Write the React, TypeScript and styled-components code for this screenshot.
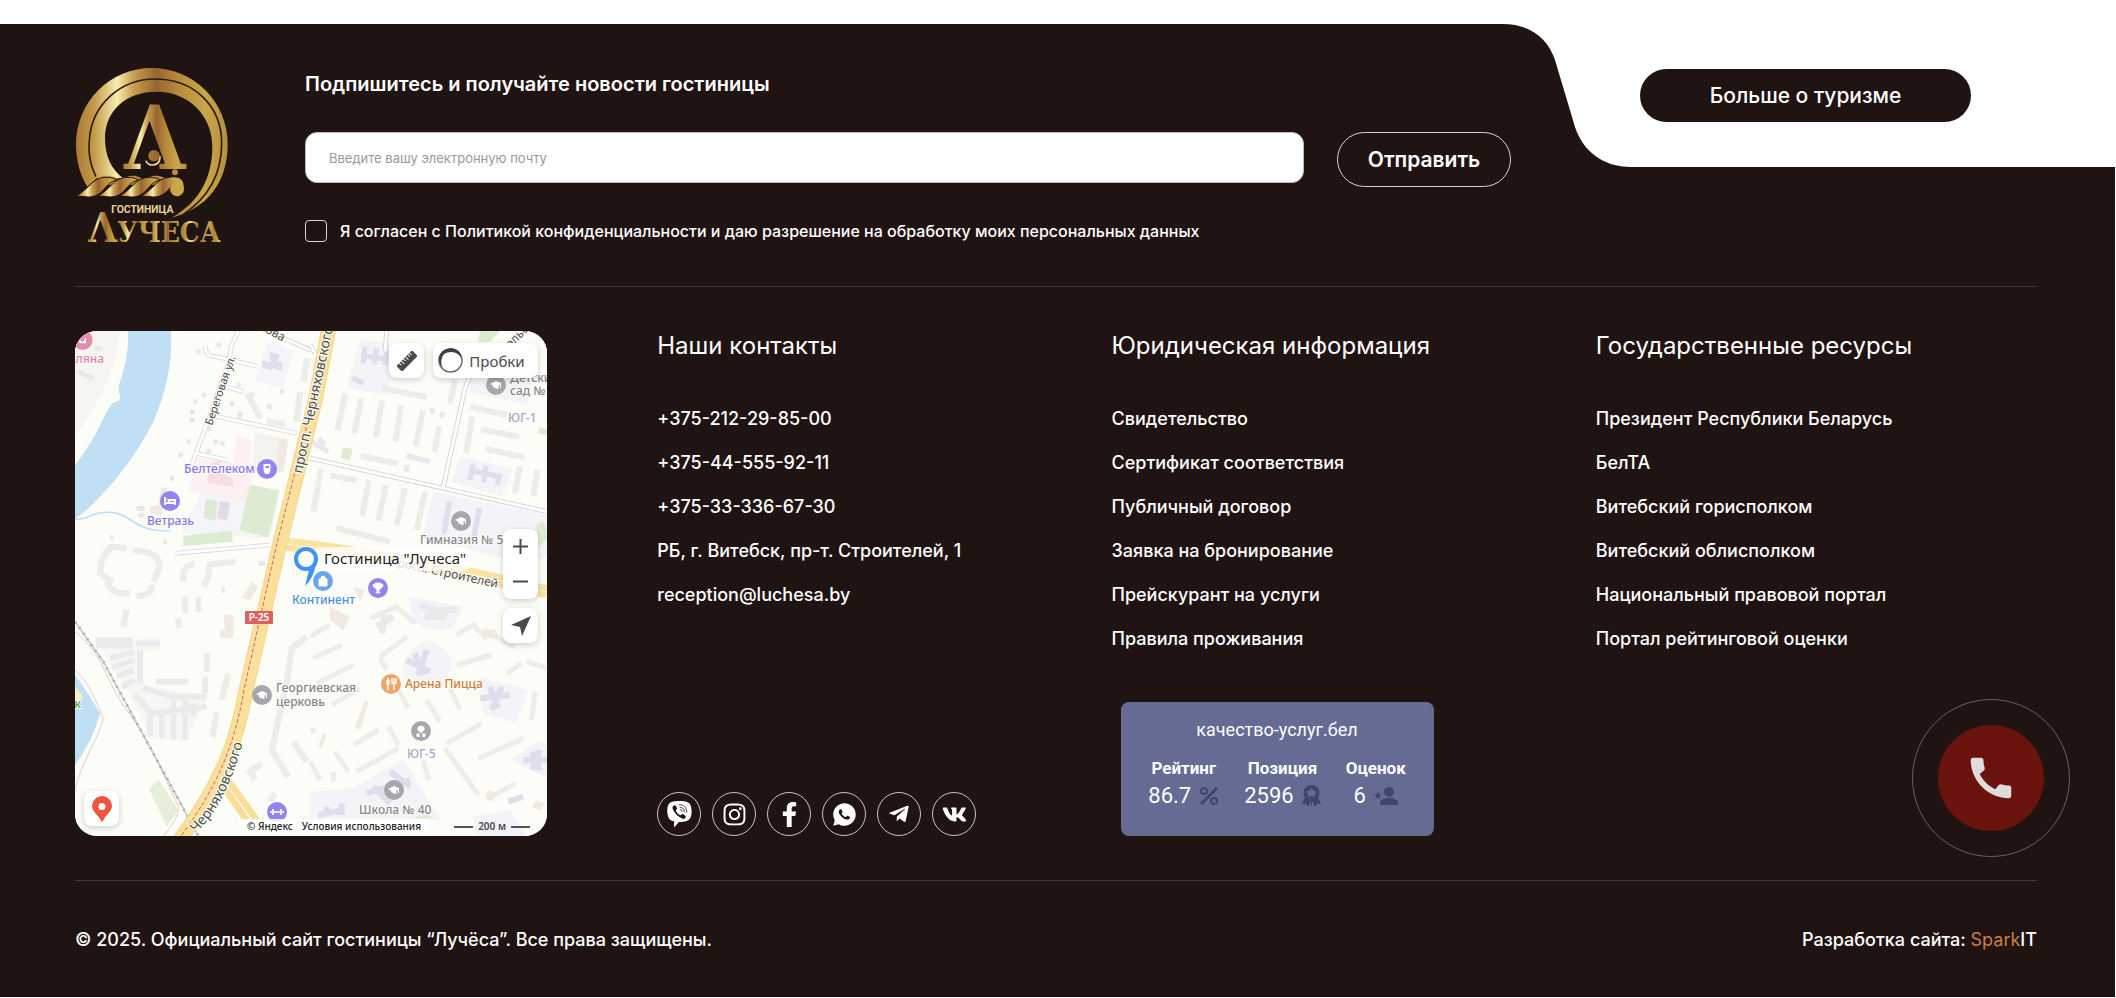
import React from "react";
import styled, { createGlobalStyle } from "styled-components";
import { FaFacebookF, FaInstagram, FaTelegramPlane, FaVk } from "react-icons/fa";
import { RiWhatsappFill } from "react-icons/ri";
import { MdCall } from "react-icons/md";

const dark = "#201412";
const line = "#3d3535";

const GlobalStyle = createGlobalStyle`
  *, *::before, *::after { box-sizing: border-box; }
  body {
    margin: 0;
    background: #fff;
    color: #fff;
    font-family: Inter, "Liberation Sans", sans-serif;
  }
  a { color: inherit; text-decoration: none; }
  button { font: inherit; cursor: pointer; }
`;

const Footer = styled.footer`
  position: relative;
  margin-top: 24px;
  margin-right: 1px;
  padding: 43px 78px 0 75px;
  background: ${dark};
`;

const Notch = styled.div`
  position: absolute;
  top: 0;
  right: -1px;
  display: flex;
  align-items: flex-start;
  margin-top: -1px;
`;

const NotchCurve = styled.svg`
  display: block;
  width: 128px;
  height: 144px;
`;

const NotchBody = styled.div`
  height: 144px;
  padding: 46px 145px 0 9px;
  background: #fff;
`;

const TourismLink = styled.a`
  display: flex;
  align-items: center;
  justify-content: center;
  width: 331px;
  height: 53px;
  border-radius: 27px;
  background: ${dark};
  font-size: 21px;
  font-weight: 500;
`;

const Top = styled.div`
  display: flex;
  align-items: center;
  gap: 77px;
  padding-bottom: 42px;
  border-bottom: 1px solid ${line};
`;

const LogoArt = styled.svg`
  display: block;
  flex: none;
  width: 153px;
  height: 177px;
  overflow: visible;
`;

const SubscribeForm = styled.form`
  flex: 0 1 1206px;
  display: flex;
  flex-direction: column;
  gap: 33px;
`;

const FormTitle = styled.label`
  font-size: 20px;
  font-weight: 600;
  line-height: 30px;
`;

const FormRow = styled.div`
  display: flex;
  align-items: flex-start;
  gap: 33px;
`;

const EmailInput = styled.input`
  flex: 1;
  min-width: 0;
  height: 51px;
  padding: 0 23px;
  border: 1px solid #b9b9b9;
  border-radius: 12px;
  background: #fff;
  color: ${dark};
  font-family: inherit;
  font-size: 13px;
  &::placeholder { color: #999; opacity: 1; }
`;

const SendButton = styled.button`
  width: 174px;
  height: 55px;
  border: 1px solid #d8d4d3;
  border-radius: 28px;
  background: transparent;
  color: #fff;
  font-size: 21px;
  font-weight: 600;
`;

const Consent = styled.label`
  display: flex;
  align-items: center;
  gap: 13px;
  font-size: 16px;
  font-weight: 500;
  line-height: 22px;
`;

const Checkbox = styled.input`
  appearance: none;
  width: 22px;
  height: 22px;
  margin: 0;
  border: 1px solid #d8d4d3;
  border-radius: 4px;
  &:checked { background: #d8d4d3; }
`;

const Columns = styled.div`
  display: grid;
  grid-template-columns: 582fr 454fr 484fr 441fr;
  padding: 44px 0;
  border-bottom: 1px solid ${line};
`;

const Column = styled.section`
  display: flex;
  flex-direction: column;
`;

const Heading = styled.h2`
  margin: 0 0 46px;
  font-size: 24px;
  font-weight: 400;
  line-height: 30px;
`;

const LinkList = styled.ul`
  display: flex;
  flex-direction: column;
  gap: 20px;
  margin: 0;
  padding: 0;
  list-style: none;
  font-size: 18px;
  font-weight: 500;
  line-height: 24px;
`;

const Socials = styled.div`
  display: flex;
  gap: 11px;
  margin-top: auto;
`;

const SocialLink = styled.a`
  display: flex;
  align-items: center;
  justify-content: center;
  width: 44px;
  height: 44px;
  border: 1px solid #c9c4c3;
  border-radius: 50%;
  font-size: 25px;
  svg { display: block; }
`;

const RatingCard = styled.a`
  display: flex;
  flex-direction: column;
  align-items: center;
  width: 313px;
  height: 134px;
  margin: auto 0 0 9px;
  padding-top: 17px;
  border-radius: 8px;
  background: #656b93;
  font-family: Roboto, sans-serif;
  font-size: 18px;
  line-height: 22px;
`;

const RatingStats = styled.div`
  display: flex;
  gap: 25px;
  margin-top: 16px;
`;

const Stat = styled.div`
  display: flex;
  flex-direction: column;
  align-items: center;
  gap: 6px;
  strong { font-size: 17px; line-height: 22px; }
`;

const StatValue = styled.span`
  display: flex;
  align-items: center;
  gap: 8px;
  font-size: 22px;
  svg { display: block; }
`;

const Bottom = styled.div`
  display: flex;
  justify-content: space-between;
  padding: 45px 0 43px;
  font-size: 18px;
  font-weight: 500;
  line-height: 28px;
`;

const Accent = styled.span`
  color: #cd7c47;
  font-weight: 400;
`;

const CallButton = styled.button`
  position: absolute;
  right: 45px;
  bottom: 140px;
  display: flex;
  align-items: center;
  justify-content: center;
  width: 158px;
  height: 158px;
  padding: 0;
  border: 1px solid #6a605f;
  border-radius: 50%;
  background: transparent;
`;

const CallDisc = styled.span`
  display: flex;
  align-items: center;
  justify-content: center;
  width: 106px;
  height: 106px;
  border-radius: 50%;
  background: #69130c;
  color: #dedcdc;
  font-size: 54px;
`;

const MapFrame = styled.div`
  position: relative;
  width: 472px;
  height: 505px;
  overflow: hidden;
  border-radius: 22px;
  background: #fcfdf7;
  font-family: "Noto Sans", "Open Sans", sans-serif;
  color: #4a4a4a;
`;

const MapArt = styled.svg`
  display: block;
  width: 100%;
  height: 100%;
`;

const MapControls = styled.div<{ $top: number }>`
  position: absolute;
  top: ${(p) => p.$top}px;
  right: 9px;
  display: flex;
  gap: 9px;
`;

const ZoomGroup = styled(MapControls)`
  flex-direction: column;
  gap: 0;
  border-radius: 8px;
  background: #fff;
  box-shadow: 0 2px 6px rgba(0, 0, 0, 0.18);
`;

const MapButton = styled.button<{ $flat?: boolean }>`
  display: flex;
  align-items: center;
  justify-content: center;
  gap: 6px;
  min-width: 35px;
  height: 35px;
  padding: 0;
  border: 0;
  border-radius: 8px;
  background: ${(p) => (p.$flat ? "transparent" : "#fff")};
  box-shadow: ${(p) => (p.$flat ? "none" : "0 2px 6px rgba(0, 0, 0, 0.18)")};
  color: #4a4a4a;
  font-size: 15px;
  svg { display: block; }
`;

const TrafficButton = styled(MapButton)`
  width: 105px;
  padding-right: 8px;
`;

const PlaceButton = styled(MapButton)`
  position: absolute;
  left: 9px;
  bottom: 10px;
`;

const MapLegal = styled.div`
  position: absolute;
  left: 164px;
  bottom: 2px;
  display: flex;
  gap: 9px;
  padding: 0 8px;
  background: rgba(255, 255, 255, 0.85);
  color: #222;
  font-size: 10px;
  font-weight: 500;
  line-height: 15px;
`;

const MapScale = styled.div`
  position: absolute;
  right: 17px;
  bottom: 2px;
  display: flex;
  align-items: center;
  gap: 5px;
  font-size: 10px;
  font-weight: 600;
  line-height: 15px;
  &::before, &::after {
    content: "";
    width: 19px;
    height: 2px;
    background: #555;
  }
`;

/* A quarter of the city map, drawn on a grid three times finer than the page. */
const Tile = ({ x, y, children }: { x: number; y: number; children: React.ReactNode }) => (
  <g transform={`translate(${x} ${y}) scale(${1 / 3})`} fill="none">
    {children}
  </g>
);

const glyphs: Record<string, React.ReactNode> = {
  bed: <path d="M-5 -4V4M-5 2H5V4M5 2V-1H-1V2M-3.500 -1.500h1" stroke="#fff" strokeWidth="1.800" fill="none" />,
  phone: <path d="M-3.500 -5H3.500V1L2 5H-2L-3.500 1Z M-1.500 -3V-1H2V-3Z" fill="#fff" fillRule="evenodd" />,
  cap: <path d="M-6 -1L0 -4L5 -2V3H4V0L2.500 .5V4L0 3.500L-3 2V.5Z" fill="#fff" />,
  cup: <path d="M-3 -5H3V-1Q2 2 .8 2V4H2V5H-2V4H-.8V2Q-2 2 -3 -1ZM-3 -3.500H-5Q-5 0 -2.500 0M3 -3.500H5Q5 0 2.500 0" stroke="#fff" strokeWidth=".8" fill="#fff" />,
  food: <path d="M-3 -6V6M-4 -4V0H-2V-4M1 -6V-1H5V-6M3 -6V6" stroke="#fff" strokeWidth="1.400" fill="none" />,
  bag: <path d="M-4 -2H4V5H-4ZM-2 -2V-4Q0 -6 2 -4V-2" stroke="#fff" strokeWidth="1" fill="#fff" />,
  gym: <path d="M-6 -1V1M-4 -3V3M-4 0H4M4 -3V3M6 -1V1" stroke="#fff" strokeWidth="1.700" />,
  park: <path d="M-3 -4Q0 -7 3 -4Q5 -1 1 1L0 3L-1 1Q-5 -1 -3 -4ZM-5 3L-2 2L-1 6H-4ZM5 3L2 2L1 6H4Z" fill="#fff" />,
};

const Poi = ({ x, y, color, glyph }: { x: number; y: number; color: string; glyph: string }) => (
  <g transform={`translate(${x} ${y})`}>
    <circle r="10" fill={color} />
    {glyphs[glyph]}
  </g>
);

const CityMap = () => (
  <MapArt viewBox="0 0 472 505" aria-label="Карта: гостиница Лучеса">
    <rect width="472" height="505" fill="#fcfdf7" />
    <Tile x={-5} y={-6}>
      <path d="M15 18H150Q140 160 15 335Z" fill="#f6f6f1" />
      <path d="M173 18H303Q310 150 250 290C200 390 110 510 15 583V420C75 350 100 270 127 235Q155 225 151 215Q142 195 150 170Q180 80 173 18Z" fill="#bfdff4" />
      <path d="M15 583C60 585 70 555 130 563S190 620 302 618" stroke="#bfdff4" strokeWidth="5" />
      <path d="M590 50L670 75L640 190L555 170Z M400 490L630 490L600 640L330 625Z" fill="#f5f4f8" />
      <path d="M500 335L545 345L540 535L355 495L385 400L490 410Z" fill="#fcf0f2" />
      <path d="M555 320L655 345L625 445L545 440Z" fill="#f3f3ef" />
      <path d="M425 412L455 405L450 440L490 462L488 487L410 472Z" fill="#f8dde2" />
      <path d="M540 478L628 498L595 637L508 615Z M408 522L443 528L437 587L400 578Z M340 632L485 618L488 650L340 664Z" fill="#deebd3" />
      <path d="M450 528L480 532L470 587L441 580Z" fill="#dfdbe9" />
      <path d="M598 80L630 90L622 108L636 112V137L612 130L600 134L577 128V108L604 112Z" fill="#e0dded" />
      <path d="M95 750L130 770M92 750Q85 700 125 665L170 670M190 675L230 682Q270 690 268 730L250 770M340 770Q335 720 372 718M410 770L420 718L495 710M530 205L572 280M590 288L645 298M690 200L680 290M712 100L700 170M635 345L625 430" stroke="#efede8" strokeWidth="19" />
      <path d="M275 485L292 490L275 570L240 565V545L265 540ZM505 258L520 262L512 285L500 280ZM630 340L655 345L640 440H622Z" fill="#f1e9e0" />
      <path d="M370 230h12M395 210h14M360 262h14M360 285h14M430 215h14M410 310h14M350 350h12M430 350h14M410 378h14M450 355h14M325 390h14M350 420h10M500 180h12M540 210h14M590 245h16M630 200h12M480 235h12M440 60h14M380 80h12M300 460h12M200 550h24M205 570h18M120 637h10M280 650h10M565 715h20M25 140l45 20M75 70h20" stroke="#e9e8e4" strokeWidth="14" />
      <path d="M505 18L485 60L477 110L404 315L365 420M405 62Q405 95 440 95L565 125M460 183L520 200M430 272L680 325M378 385L472 405M315 685L600 660M630 35L720 75" stroke="#d8d8dc" strokeWidth="14" />
      <path d="M505 18L485 60L477 110L404 315L365 420M405 62Q405 95 440 95L565 125M460 183L520 200M430 272L680 325M378 385L472 405M315 685L600 660M630 35L720 75" stroke="#fff" strokeWidth="9" />
      <circle cx="38" cy="45" r="30" fill="#e58bb2" />
      <path d="M28 35Q35 65 48 35V55H28Z" fill="#fff" />
    </Tile>
    <Tile x={235} y={-6}>
      <path d="M150 40L260 65L230 210L110 190ZM480 130L670 160L650 240L480 200ZM450 395L610 430L575 515L425 470ZM370 500L712 570V700H580L335 640Z" fill="#f4f4f8" />
      <path d="M510 18H570L540 50L505 50ZM100 367L128 372L120 406L93 400ZM690 308L712 312V332L683 325ZM680 600Q710 570 712 640L680 670Z" fill="#deebd3" />
      <path d="M106 205L82 317M154 220L133 325M216 225L198 337M274 240L256 350M340 253L316 365M388 303L373 380M217 190L350 216M435 165L420 235M480 245L590 270M487 275L468 385M513 313L628 336M527 372L643 397M152 393L265 416M630 425L615 505M682 435L670 512M33 432L10 560M62 452L140 466M177 465L156 575M228 480L205 588M285 490L260 602M345 500L320 615M80 610L240 650" stroke="#efede8" strokeWidth="18" />
      <path d="M165 65L160 115M158 92L230 102M200 70L193 115M230 75L225 120M127 160L160 173M490 417L480 465M482 436L570 455M528 422L520 472M570 445L562 480M418 530L402 625M508 550L492 635" stroke="#e0dded" strokeWidth="16" />
      <path d="M290 392l70 18M290 420v20M360 258h14M390 270h14M25 340l20 20M5 350l50 30" stroke="#e9e8ee" strokeWidth="16" />
      <path d="M230 18L225 80M500 100L465 190L400 485M0 400L712 560M0 60L15 85" stroke="#cfcfd6" strokeWidth="14" />
      <path d="M230 18L225 80M500 100L465 190L400 485M0 400L712 560M0 60L15 85" stroke="#fff" strokeWidth="9" />
    </Tile>
    <Tile x={-5} y={249}>
      <path d="M15 285Q50 330 90 400Q70 480 15 555Z" fill="#bfdff4" />
      <path d="M15 320L40 350L15 380Z" fill="#fcefc3" />
      <path d="M265 598L325 690L290 740L238 628Z" fill="#e4f0d9" />
      <path d="M75 180L270 175V210L220 215V315L415 345L350 480L240 470L180 340Z" fill="#f6f6f4" />
      <path d="M78 180H187M78 197H187M198 190H270M120 235L190 215M125 262L190 242M140 290L190 270M155 320L195 300M210 210V310M258 305H355M410 220V275M405 290V340M220 325L310 350H410M195 345L245 400L410 380M240 390V470M275 390V475M310 360V480M345 360V480M370 370V410M385 50V95" stroke="#ebebeb" strokeWidth="17" />
      <path d="M110 5Q125 45 180 40M200 48Q250 45 245 15M170 88L160 140M475 280L455 360M440 395L428 470M710 170L665 205L650 310L605 510L655 590M670 485L710 545M575 550L540 575L555 600M325 115L328 145M405 0V20M455 30h10M345 50V100M615 640L600 665" stroke="#efede8" strokeWidth="19" />
      <path d="M460 105H490V175H450V150H465ZM545 5L565 20L540 60L515 55Z" fill="#f1e9e2" />
      <path d="M15 155C100 220 110 310 170 390S260 540 325 680Q330 710 280 768M15 270C60 310 80 370 100 415C80 490 35 540 15 630" stroke="#e4cfc3" strokeWidth="3" />
      <path d="M15 125L100 245L385 768" stroke="#c9c9c9" strokeWidth="5" />
      <path d="M15 125L100 245L385 768" stroke="#aaa" strokeWidth="8" strokeDasharray="5 16" />
      <path d="M470 595L560 720M450 605L530 720" stroke="#f9dd99" strokeWidth="20" />
    </Tile>
    <Tile x={235} y={249}>
      <path d="M295 50L460 80L430 140Q370 170 310 120ZM345 180Q430 200 425 260L400 320L290 300Q250 240 345 180ZM505 290L655 330L620 430L520 400ZM280 535L390 720H0V635L130 625ZM680 485L712 490V595L605 540ZM490 710L600 690L650 768H500Z" fill="#f4f4f8" />
      <path d="M0 170L60 135M10 235L95 195M20 310L130 255M65 375L150 325M130 495L205 450M140 575L265 505M210 230L290 170M210 235L230 270M180 115L260 80L315 130M440 165L490 135L530 175M545 165L615 200M440 255L545 225M590 280L635 250M265 330L295 385M350 360L390 425M410 490L515 430M405 505L505 645M505 535L640 475M235 440L265 495M75 515L115 575M340 540L355 600M0 545L30 600M545 650L615 610M650 245L712 265M675 335L665 420M420 325L450 390M70 575V605" stroke="#efede8" strokeWidth="15" />
      <path d="M330 75L370 90L440 90M345 110L410 110M225 105L215 160M250 110L200 140" stroke="#ebeaea" strokeWidth="20" />
      <path d="M290 240L360 275M315 220L340 285M350 210L325 285M510 355L600 345M540 320L565 385M575 320L545 390M640 540H712M665 515L690 570M690 510L665 570M170 640L300 600M190 620L240 670M240 575L300 620M25 705L100 690M50 680V710M95 670V705M595 665L640 650" stroke="#e0dded" strokeWidth="18" />
      <path d="M60 80L120 110L100 150L60 120ZM165 360L175 370L150 450L135 440ZM0 440L20 450L5 465ZM40 460L50 465L35 505L25 495ZM130 20L165 30L150 65ZM520 145L560 150L565 175L520 175ZM535 630L560 640L545 665L525 655ZM680 660L705 670L690 690L665 680Z" fill="#f1e9e2" />
      <path d="M310 715Q350 695 368 715Z" fill="#deebd3" />
    </Tile>
    <path d="M210 213Q330 226 472 261" fill="none" stroke="#fae29f" strokeWidth="13" />
    <path d="M210 213Q330 226 472 261" fill="none" stroke="#fff8e0" strokeWidth="1" />
    <path d="M254 -4L241 66L204 216L171 359C162 412 145 455 104 510" fill="none" stroke="#f5d68d" strokeWidth="15" />
    <path d="M254 -4L241 66L204 216L171 359C162 412 145 455 104 510" fill="none" stroke="#fbe09b" strokeWidth="13" />
    <path d="M251 -4L239 66L201 216L169 359C160 412 143 455 106 505" fill="none" stroke="#cc6670" strokeWidth="1" strokeDasharray="4 2" />

    <g fontSize="12" fontWeight="500" stroke="#fcfdf7" strokeWidth="2" paintOrder="stroke">
      <text x="29" y="32" textAnchor="end" fill="#dc84ad">оляна</text>
      <text transform="translate(137 95) rotate(-71)" fill="#4d4d4d" fontWeight="400" fontSize="11">Береговая ул.</text>
      <text transform="translate(184 -2) rotate(28)" fill="#4d4d4d" fontWeight="400">кова</text>
      <text transform="translate(435 18) rotate(-45)" fill="#4d4d4d" fontWeight="400">ольская</text>
      <text transform="translate(227 143) rotate(-78)" fill="#4d4d4d" fontSize="14" fontWeight="400">просп. Черняховского</text>
      <text x="109" y="142" fill="#8878e8">Белтелеком</text>
      <text x="72" y="194" fill="#8878e8">Ветразь</text>
      <text x="435" y="51" fill="#85878c">Детский</text>
      <text x="435" y="64" fill="#85878c">сад № 1</text>
      <text x="433" y="91" fill="#aaa5cb">ЮГ-1</text>
      <text x="345" y="213" fill="#85878c">Гимназия № 5</text>
      <text transform="translate(315 234) rotate(12)" fill="#4d4d4d" fontWeight="400">просп. Строителей</text>
      <text x="217" y="273" fill="#4d91e0">Континент</text>
      <text x="201" y="361" fill="#85878c">Георгиевская</text>
      <text x="201" y="375" fill="#85878c">церковь</text>
      <text x="330" y="357" fill="#cf7f38">Арена Пицца</text>
      <text x="332" y="427" fill="#aaa5cb">ЮГ-5</text>
      <text x="284" y="483" fill="#85878c">Школа № 40</text>
      <path id="south-street" d="M121 502C145 478 157 450 170 405" fill="none" stroke="none" />
      <text fill="#4d4d4d" fontSize="14" fontWeight="400">
        <textPath href="#south-street">Черняховского</textPath>
      </text>
      <text x="6" y="377" textAnchor="end" fill="#5ca04e">к</text>
    </g>

    <rect x="170" y="280" width="28" height="13" rx="1" fill="#dd625f" />
    <text x="184" y="290" textAnchor="middle" fontSize="10" fontWeight="600" fill="#fff">Р-25</text>

    <Poi x={192} y={138} color="#9384ef" glyph="phone" />
    <Poi x={95} y={170} color="#9384ef" glyph="bed" />
    <Poi x={421} y={54} color="#a5a7ab" glyph="cap" />
    <Poi x={386} y={190} color="#a5a7ab" glyph="cap" />
    <Poi x={248} y={250} color="#69a6ea" glyph="bag" />
    <Poi x={303} y={257} color="#9384ef" glyph="cup" />
    <Poi x={187} y={364} color="#a5a7ab" glyph="cap" />
    <Poi x={316} y={353} color="#f0a466" glyph="food" />
    <Poi x={346} y={400} color="#a5a7ab" glyph="park" />
    <Poi x={319} y={459} color="#a5a7ab" glyph="cap" />
    <Poi x={202} y={481} color="#9384ef" glyph="gym" />

    <rect x="236" y="216" width="163" height="24" rx="12" fill="#fff" fillOpacity=".8" />
    <text x="249" y="233" fontSize="15" fill="#1f1f1f">Гостиница "Лучеса"</text>
    <path d="M241 232Q239 247 230 255L234 239Z" fill="#3d94f6" />
    <circle cx="231" cy="228" r="10" fill="#fff" stroke="#3d94f6" strokeWidth="4" />
  </MapArt>
);

const HotelMap = () => (
  <MapFrame>
    <CityMap />
    <MapControls $top={12}>
      <MapButton type="button" aria-label="Линейка">
        <svg width="20" height="20" viewBox="0 0 20 20">
          <g transform="rotate(-45 10 10)">
            <rect x="-1" y="6" width="22" height="8" rx="1" fill="#4a4a4a" />
            <path d="M3 6V9M6 6V10M9 6V9M12 6V10M15 6V9M17.500 6V9" stroke="#fff" strokeWidth="1" />
          </g>
        </svg>
      </MapButton>
      <TrafficButton type="button">
        <svg width="25" height="25" viewBox="0 0 25 25">
          <circle cx="12.500" cy="12.500" r="11.500" fill="#fff" stroke="#6d6d6d" strokeWidth="1.500" />
          <path d="M1 9C4 0 16 -3 22 5L24 12Q21 4 13 4T4 10Q2 15 5 20Q0 15 1 9Z" fill="#3f3f3f" />
        </svg>
        Пробки
      </TrafficButton>
    </MapControls>
    <ZoomGroup $top={198}>
      <MapButton type="button" $flat aria-label="Приблизить">
        <svg width="15" height="15" viewBox="0 0 15 15">
          <path d="M0 7.500H15M7.500 0V15" stroke="#4a4a4a" strokeWidth="2" />
        </svg>
      </MapButton>
      <MapButton type="button" $flat aria-label="Отдалить">
        <svg width="15" height="15" viewBox="0 0 15 15">
          <path d="M0 7.500H15" stroke="#4a4a4a" strokeWidth="2" />
        </svg>
      </MapButton>
    </ZoomGroup>
    <MapControls $top={277}>
      <MapButton type="button" aria-label="Моё местоположение">
        <svg width="20" height="20" viewBox="0 0 20 20">
          <path d="M20 0L11 20L9 11L0 9Z" fill="#4a4a4a" />
        </svg>
      </MapButton>
    </MapControls>
    <PlaceButton type="button" aria-label="Открыть в картах">
      <svg width="20" height="26" viewBox="0 0 20 26">
        <path d="M10 0A10 10 0 0 1 20 10C20 16 13 19 11 25Q10 26 9 25C7 19 0 16 0 10A10 10 0 0 1 10 0Z" fill="#ee553e" />
        <circle cx="10" cy="10.500" r="3.500" fill="#fff" />
      </svg>
    </PlaceButton>
    <MapLegal>
      <a href="#yandex">© Яндекс</a>
      <a href="#terms">Условия использования</a>
    </MapLegal>
    <MapScale>200 м</MapScale>
  </MapFrame>
);

const goldStops = (
  <>
    <stop offset="0" stopColor="#a87c36" />
    <stop offset=".12" stopColor="#c39a4a" />
    <stop offset=".27" stopColor="#f8eeac" />
    <stop offset=".38" stopColor="#c79f50" />
    <stop offset=".53" stopColor="#996530" />
    <stop offset=".68" stopColor="#b98b3c" />
    <stop offset=".85" stopColor="#c9a648" />
    <stop offset="1" stopColor="#b58f3c" />
  </>
);

const Logo = () => (
  <LogoArt viewBox="45 51 459 531" role="img" aria-label="Гостиница Лучёса">
    <defs>
      <linearGradient id="gold" gradientUnits="userSpaceOnUse" x1="48" x2="503" y1="0" y2="0">
        {goldStops}
      </linearGradient>
      <linearGradient id="gold-letter" x1="0" x2="1" y1="0" y2="0">
        {goldStops}
      </linearGradient>
      <linearGradient id="gold-word" gradientUnits="userSpaceOnUse" x1="87" x2="180" y1="0" y2="0" spreadMethod="repeat">
        {goldStops}
      </linearGradient>
    </defs>
    <path
      d="M82 410C60 375 48 330 48 282A227.500 228 0 0 1 503 282C503 400 440 475 335 503C420 455 457 380 457 290C457 195 385 125 290 125C200 125 135 180 135 265C135 320 155 360 190 385L110 385Z"
      fill="url(#gold)"
    />
    <path
      d="M108 380C90 345 84 310 88 270C95 165 180 87 285 87C400 87 485 165 485 280C485 370 450 440 370 493"
      fill="none"
      stroke="#2c1c10"
      strokeWidth="5"
    />
    <text x="284" y="357" textAnchor="middle" fontFamily='"DejaVu Serif Condensed", "DejaVu Serif", serif' fontWeight="700" fontSize="264" fill="url(#gold-letter)">
      Λ
    </text>
    <path d="M300 318C302 350 262 352 258 332" fill="none" stroke="#e9d88d" strokeWidth="5" />
    <circle cx="282" cy="317" r="17" fill="url(#gold)" />
    <path d="M100 396C112 382 126 377 140 377C160 377 172 384 182 392C195 381 206 377 218 377C236 377 244 384 252 392C264 381 274 377 286 377C306 377 318 384 330 394V404H100Z" fill="#b98b4a" />
    <g stroke={dark} strokeWidth="3">
      {[0, 65, 130, 195].map((dx) => (
        <path
          key={dx}
          transform={`translate(${dx} 0)`}
          d="M50 438C90 412 96 390 122 384C140 380 158 382 172 390C150 394 142 406 130 420C116 436 100 441 85 441Z"
          fill="url(#gold-letter)"
        />
      ))}
    </g>
    <path d="M325 385Q372 372 372 415A21 21 0 1 1 340 400Q352 392 325 385Z" fill="#c9a648" />
    <circle cx="345" cy="367" r="9" fill="#b98b3c" />
    <text x="247" y="488" textAnchor="middle" fontFamily='Roboto, "Liberation Sans", sans-serif' fontWeight="700" fontSize="31" fill="#e6d393">
      ГОСТИНИЦА
    </text>
    <text x="85" y="577" fontFamily='"DejaVu Serif Condensed", "DejaVu Serif", serif' fontWeight="700" fontSize="84" fill="url(#gold-word)">
      <tspan fontSize="124">Λ</tspan>УЧЕСА
    </text>
  </LogoArt>
);

const ViberIcon = () => (
  <svg width="25" height="27" viewBox="0 0 25 27" fill="none">
    <path
      d="M12.500 0C19 0 22 1 23.500 4C25 8 25 13 23.500 16.500C22 20 18 21 12 21L7 26.500V20.300C3 19.500 1.500 17.500 .8 14.500C0 11 0 7 1.200 4C3 .8 6 0 12.500 0Z"
      fill="#fff"
    />
    <path
      d="M7 4.500C8 4 8.500 4.500 9.300 5.700C10.200 7 10.300 7.600 9.500 8.400C8.600 9.200 8.800 9.800 9.900 11.500C11 13 12 13.800 13.200 14.200C14.200 14.500 14.300 13.200 15.300 13C16.200 13 18.500 14.700 18.800 15.500C19 16.500 17.500 18 16.500 17.900C14.500 17.500 10.500 15.200 8.500 12.500C6.700 10.200 5.400 7.800 5.500 6.500C5.600 5.500 6.200 4.900 7 4.500Z"
      fill={dark}
    />
    <path d="M12.500 3.500C17 3.800 19.700 6.500 19.800 11.200M12.900 6C15.800 6.300 17.200 7.800 17.400 10.700M13.200 8.300C14.500 8.500 15 9 15.100 10.300" stroke={dark} strokeWidth=".8" strokeLinecap="round" />
  </svg>
);

const legalLinks = [
  "Свидетельство",
  "Сертификат соответствия",
  "Публичный договор",
  "Заявка на бронирование",
  "Прейскурант на услуги",
  "Правила проживания",
];

const stateLinks = [
  "Президент Республики Беларусь",
  "БелТА",
  "Витебский горисполком",
  "Витебский облисполком",
  "Национальный правовой портал",
  "Портал рейтинговой оценки",
];

const socials = [
  { name: "Viber", icon: <ViberIcon /> },
  { name: "Instagram", icon: <FaInstagram /> },
  { name: "Facebook", icon: <FaFacebookF /> },
  { name: "WhatsApp", icon: <RiWhatsappFill size={27} /> },
  { name: "Telegram", icon: <FaTelegramPlane size={22} /> },
  { name: "ВКонтакте", icon: <FaVk /> },
];

const iconInk = "#404570";

export default function App() {
  return (
    <>
      <GlobalStyle />
      <Footer>
        <Notch>
          <NotchCurve viewBox="0 0 128 144" aria-hidden="true">
            <path d="M0 0V1C26 1 45 15 52 37L72 104C80 128 100 144 128 144V0Z" fill="#fff" />
          </NotchCurve>
          <NotchBody>
            <TourismLink href="#tourism">Больше о туризме</TourismLink>
          </NotchBody>
        </Notch>

        <Top>
          <Logo />
          <SubscribeForm onSubmit={(e) => e.preventDefault()}>
            <FormTitle htmlFor="email">Подпишитесь и получайте новости гостиницы</FormTitle>
            <FormRow>
              <EmailInput id="email" type="email" placeholder="Введите вашу электронную почту" />
              <SendButton type="submit">Отправить</SendButton>
            </FormRow>
            <Consent>
              <Checkbox type="checkbox" />
              Я согласен с Политикой конфиденциальности и даю разрешение на обработку моих персональных данных
            </Consent>
          </SubscribeForm>
        </Top>

        <Columns>
          <HotelMap />
          <Column>
            <Heading>Наши контакты</Heading>
            <LinkList>
              <li><a href="tel:+375212298500">+375-212-29-85-00</a></li>
              <li><a href="tel:+375445559211">+375-44-555-92-11</a></li>
              <li><a href="tel:+375333366730">+375-33-336-67-30</a></li>
              <li>РБ, г. Витебск, пр-т. Строителей, 1</li>
              <li><a href="mailto:reception@luchesa.by">reception@luchesa.by</a></li>
            </LinkList>
            <Socials>
              {socials.map((s) => (
                <SocialLink key={s.name} href="#social" aria-label={s.name}>
                  {s.icon}
                </SocialLink>
              ))}
            </Socials>
          </Column>
          <Column>
            <Heading>Юридическая информация</Heading>
            <LinkList>
              {legalLinks.map((t) => (
                <li key={t}><a href="#legal">{t}</a></li>
              ))}
            </LinkList>
            <RatingCard href="#rating">
              качество-услуг.бел
              <RatingStats>
                <Stat>
                  <strong>Рейтинг</strong>
                  <StatValue>
                    86.7
                    <svg width="20" height="20" viewBox="0 0 20 20" fill="none" stroke={iconInk} strokeWidth="2">
                      <path d="M2 18L18 2" strokeWidth="3" />
                      <circle cx="5" cy="5" r="3" />
                      <circle cx="15" cy="15" r="3" />
                    </svg>
                  </StatValue>
                </Stat>
                <Stat>
                  <strong>Позиция</strong>
                  <StatValue>
                    2596
                    <svg width="19" height="22" viewBox="0 0 19 22" fill={iconInk}>
                      <path d="M3 12L0 19H4L6 22L9 16V21H10V16L13 22L15 19H19L16 12Z" />
                      <circle cx="9.500" cy="8" r="8" />
                      <path d="M9.500 3L11.500 5.500L14.500 6.500L12.700 9V12L9.500 11L6.300 12V9L4.500 6.500L7.500 5.500Z" fill="#656b93" />
                    </svg>
                  </StatValue>
                </Stat>
                <Stat>
                  <strong>Оценок</strong>
                  <StatValue>
                    6
                    <svg width="24" height="20" viewBox="0 0 24 20" fill={iconInk}>
                      <circle cx="15" cy="6" r="5" />
                      <path d="M6 19V16Q8 12 15 12T24 16V19Z" />
                      <path d="M4 5L5.200 8H8L5.800 10L6.500 13L4 11.500L1.500 13L2.200 10L0 8H2.800Z" />
                    </svg>
                  </StatValue>
                </Stat>
              </RatingStats>
            </RatingCard>
          </Column>
          <Column>
            <Heading>Государственные ресурсы</Heading>
            <LinkList>
              {stateLinks.map((t) => (
                <li key={t}><a href="#state">{t}</a></li>
              ))}
            </LinkList>
          </Column>
        </Columns>

        <Bottom>
          <span>© 2025. Официальный сайт гостиницы “Лучёса”. Все права защищены.</span>
          <span>
            Разработка сайта: <a href="#sparkit"><Accent>Spark</Accent>IT</a>
          </span>
        </Bottom>

        <CallButton type="button" aria-label="Позвонить">
          <CallDisc>
            <MdCall />
          </CallDisc>
        </CallButton>
      </Footer>
    </>
  );
}
